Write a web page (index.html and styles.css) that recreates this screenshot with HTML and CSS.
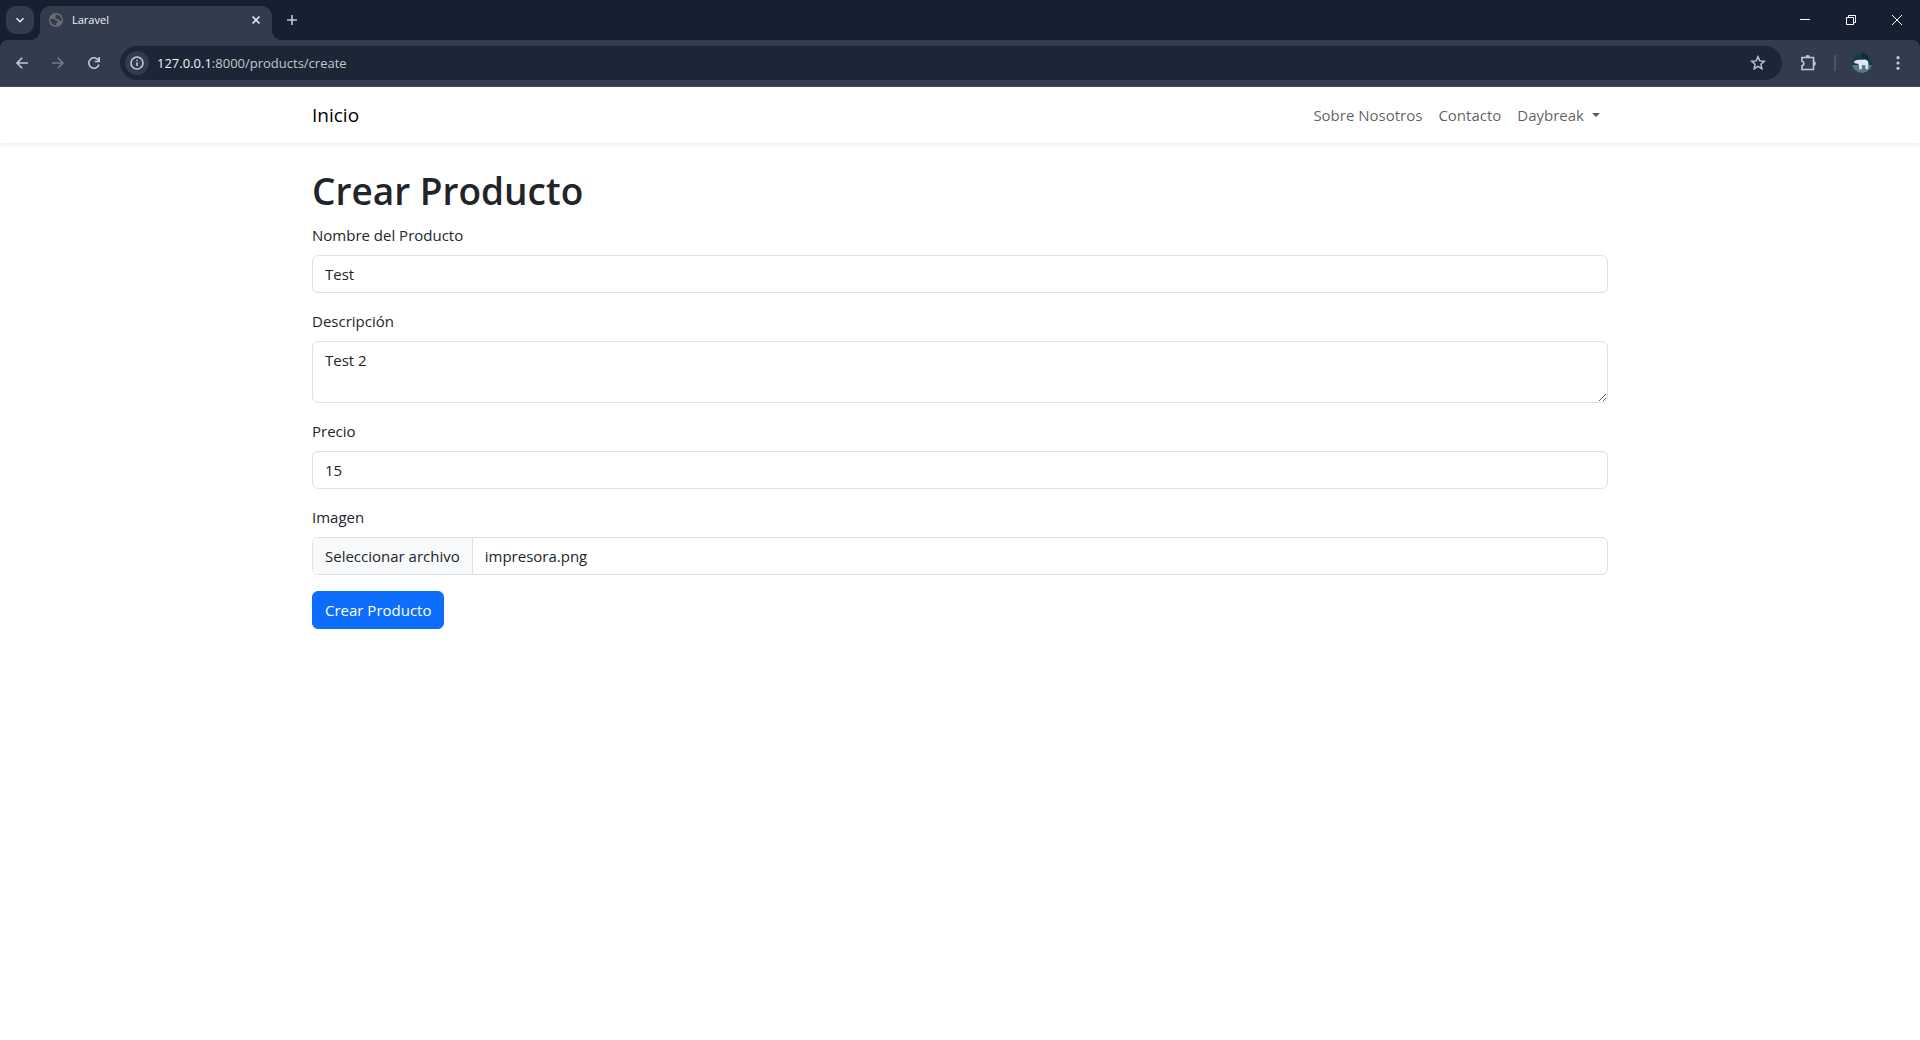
FILE: index.html
```html
<!DOCTYPE html>
<html lang="es">
<head>
<meta charset="utf-8">
<meta name="viewport" content="width=device-width, initial-scale=1">
<title>Laravel</title>
<link rel="stylesheet" href="styles.css">
</head>
<body>
<div class="browser">
  <div class="tab-strip">
    <button class="tab-search" type="button" aria-label="Buscar pestañas">
      <svg width="12" height="12" viewBox="0 0 12 12"><path d="M2.500 4.200 6 7.700l3.500-3.500" class="line strong"/></svg>
    </button>
    <div class="tab">
      <svg class="favicon" width="14" height="14" viewBox="0 0 14 14"><circle cx="7" cy="7" r="7" fill="#6b6d70"/><path d="M1.300 6h3c1.700 0 1.400 1.700 2.800 1.800 1.500.1 1.900.4 1.800 1.200-.1.900-1.500.8-1.600 1.500l-.2 1.900C4 12.300 1.400 9.700 1.300 6zM6.800 1.500c2.500 0 4.700 1.500 5.500 3.800.3 1 .4 1.700.3 2.500H11c-.8 0-.6-1.400-1.600-1.600-1-.2-2.200.1-2.800-.6-.7-.9.300-1.200 0-2C6.400 3 6.500 2.300 6.800 1.500z" fill="#333c4d"/></svg>
      <span class="tab-title">Laravel</span>
      <button class="tab-close" type="button" aria-label="Cerrar pestaña">
        <svg width="10" height="10" viewBox="0 0 10 10"><path d="m1.500 1.500 7 7m0-7-7 7" class="line strong"/></svg>
      </button>
    </div>
    <button class="new-tab" type="button" aria-label="Nueva pestaña">
      <svg width="12" height="12" viewBox="0 0 12 12"><path d="M6 1v10M1 6h10" class="line"/></svg>
    </button>
    <div class="window-controls">
      <button type="button" aria-label="Minimizar"><svg width="10" height="10" viewBox="0 0 10 10"><path d="M0 4.500h10" class="thin"/></svg></button>
      <button type="button" aria-label="Restaurar"><svg width="10" height="10" viewBox="0 0 10 10"><path d="M.5 2.500h7v7h-7zM2.500 2.500v-2h7v7h-2" class="thin"/></svg></button>
      <button type="button" aria-label="Cerrar"><svg width="10" height="10" viewBox="0 0 10 10"><path d="m0 0 10 10M10 0 0 10" class="thin"/></svg></button>
    </div>
  </div>
  <div class="toolbar">
    <button class="tool" type="button" aria-label="Atrás"><svg width="14" height="14" viewBox="0 0 14 14"><path d="M13 7H2m5.200-5.200L2 7l5.200 5.200" class="line"/></svg></button>
    <button class="tool disabled" type="button" aria-label="Adelante" disabled><svg width="14" height="14" viewBox="0 0 14 14"><path d="M1 7h11M6.800 1.800 12 7l-5.200 5.200" class="line"/></svg></button>
    <button class="tool" type="button" aria-label="Recargar"><svg width="14" height="14" viewBox="0 0 14 14"><path d="M11.800 5A5.200 5.200 0 1 0 12 8.500M12.200 1v4.500H7.700" class="line"/></svg></button>
    <div class="address">
      <button class="site-info" type="button" aria-label="Información del sitio"><svg width="14" height="14" viewBox="0 0 14 14"><circle cx="7" cy="7" r="6" class="line"/><path d="M7 6.300V10M7 3.700v1.400" class="line"/></svg></button>
      <span class="url"><span class="host">127.0.0.1</span>:8000/products/create</span>
      <button class="star" type="button" aria-label="Agregar a favoritos"><svg width="16" height="16" viewBox="0 0 16 16"><path d="m8 1.700 1.800 4.200 4.500.4-3.400 3 1 4.500L8 11.400l-3.900 2.400 1-4.500-3.400-3 4.500-.4z" class="line slim"/></svg></button>
    </div>
    <button class="tool" type="button" aria-label="Extensiones"><svg width="18" height="18" viewBox="0 0 18 18"><path d="M3 3.500h11.500v12H3v-3.700c2.500-.6 2.500-4 0-4.600z" class="line"/><path d="M6.500 3.300a2.200 2.200 0 0 1 4.400 0zM14.700 7.300a2.200 2.200 0 0 1 0 4.400z" fill="#c1c8da"/></svg></button>
    <span class="separator"></span>
    <button class="tool" type="button" aria-label="Perfil"><svg width="20" height="20" viewBox="0 0 20 20"><defs><clipPath id="avatar"><circle cx="10" cy="10" r="10"/></clipPath></defs><g clip-path="url(#avatar)"><path fill="#173c43" d="M0 0h20v20H0z"/><path fill="#527b80" d="M0 12h20v8H0z"/><path fill="#102b31" d="M10 0h6v7h-6z"/><path fill="#e2e5f7" d="M2 8.500 4.500 7l4-.2 5-.3 2.500 1.800.5 3-.7 5h-2.200l-.3-4-3.300-.2-.4 4.200H7.200L7 12l-2-1.500-2.500-.3z"/></g></svg></button>
    <button class="tool" type="button" aria-label="Menú"><svg width="4" height="14" viewBox="0 0 4 14" fill="#c1c8da"><circle cx="2" cy="1.700" r="1.600"/><circle cx="2" cy="7" r="1.600"/><circle cx="2" cy="12.300" r="1.600"/></svg></button>
  </div>
</div>

<header class="navbar">
  <nav class="container nav-inner">
    <a class="brand" href="#">Inicio</a>
    <div class="nav-links">
      <a href="#">Sobre Nosotros</a>
      <a href="#">Contacto</a>
      <a class="dropdown" href="#">Daybreak</a>
    </div>
  </nav>
</header>

<main class="container content">
  <h1>Crear Producto</h1>
  <form>
    <div class="field">
      <label for="name">Nombre del Producto</label>
      <input class="control" id="name" type="text" value="Test">
    </div>
    <div class="field">
      <label for="description">Descripción</label>
      <textarea class="control" id="description" rows="2">Test 2</textarea>
    </div>
    <div class="field">
      <label for="price">Precio</label>
      <input class="control" id="price" type="text" inputmode="decimal" value="15">
    </div>
    <div class="field">
      <label for="image">Imagen</label>
      <input class="file-input" id="image" type="file" accept="image/*">
      <label class="control file-control" for="image"><span class="file-button">Seleccionar archivo</span><span class="file-name">impresora.png</span></label>
    </div>
    <button class="submit" type="button">Crear Producto</button>
  </form>
</main>
</body>
</html>
```
FILE: styles.css
```css
*, *::before, *::after { box-sizing: border-box; }

body {
  margin: 0;
  background: #fff;
  color: #212529;
  font: 15px/24px "Segoe UI", "Open Sans", sans-serif;
}

button, input, textarea { font: inherit; color: inherit; }
a { color: inherit; text-decoration: none; }
svg { display: block; }

/* Browser window */
.browser { background: #172030; color: #e3e6ee; }
.browser button {
  display: flex;
  align-items: center;
  justify-content: center;
  flex: none;
  padding: 0;
  border: 0;
  background: none;
}
.line { fill: none; stroke: #c1c8da; stroke-width: 1.6; }
.strong { stroke: #e3e6ee; stroke-width: 1.6; }
.slim { stroke-width: 1.4; }
.thin { fill: none; stroke: #fff; stroke-width: 1; }

.tab-strip { display: flex; align-items: center; height: 40px; padding-left: 6px; }
.browser .tab-search { width: 28px; height: 28px; border-radius: 10px; background: #333c4d; }
.tab {
  position: relative;
  display: flex;
  align-items: center;
  align-self: flex-end;
  width: 232px;
  height: 34px;
  margin-left: 6px;
  padding: 0 8px 6px 9px;
  border-radius: 10px 10px 0 0;
  background: #333c4d;
}
.tab::before, .tab::after {
  content: "";
  position: absolute;
  bottom: 0;
  width: 10px;
  height: 10px;
}
.tab::before { right: 100%; background: radial-gradient(circle at 0 0, transparent 10px, #333c4d 10px); }
.tab::after { left: 100%; background: radial-gradient(circle at 100% 0, transparent 10px, #333c4d 10px); }
.tab-title { flex: 1; margin-left: 9px; color: #f1f3f8; font-size: 11px; line-height: 16px; }
.tab-close { width: 16px; height: 16px; }
.new-tab { width: 28px; height: 28px; margin-left: 6px; }
.window-controls { display: flex; margin-left: auto; }
.window-controls button { width: 46px; height: 40px; }

.toolbar {
  display: flex;
  align-items: center;
  height: 47px;
  padding: 0 4px 1px;
  border-bottom: 1px solid #484e5b;
  border-radius: 8px 8px 0 0;
  background: #333c4d;
}
.tool { width: 36px; height: 34px; }
.disabled { opacity: .45; }
.address {
  display: flex;
  align-items: center;
  flex: 1;
  height: 34px;
  margin: 0 8px;
  padding: 0 12px 0 5px;
  border-radius: 17px;
  background: #1d2636;
}
.browser .site-info { width: 24px; height: 24px; border-radius: 50%; background: #333c4d; }
.url { flex: 1; margin-left: 8px; color: #c3c6cc; font-size: 13px; line-height: 20px; }
.host { color: #f1f3f8; }
.star { width: 24px; height: 24px; }
.separator { width: 2px; height: 16px; margin: 0 8px; background: #4c5567; }

/* Page */
.container { width: 100%; max-width: 1320px; margin: 0 auto; padding: 0 12px; }
.navbar { padding: 8px 0; background: #fff; box-shadow: 0 2px 4px rgba(0, 0, 0, .075); }
.nav-inner { display: flex; align-items: center; justify-content: space-between; }
.brand { color: #000; font-size: 19px; line-height: 30px; }
.nav-links { display: flex; color: rgba(0, 0, 0, .65); }
.nav-links a { padding: 8px; }
.dropdown::after {
  content: "";
  display: inline-block;
  margin-left: 8px;
  vertical-align: 4px;
  border: solid transparent;
  border-width: 4px 4px 0;
  border-top-color: currentColor;
}

.content { padding-top: 24px; padding-bottom: 24px; }
h1 { margin: 0 0 8px; font-size: 37px; font-weight: 600; line-height: 48px; }
.field { margin-bottom: 16px; }
.field > label { display: block; margin-bottom: 8px; }
.control {
  display: block;
  width: 100%;
  min-height: 38px;
  padding: 6px 12px;
  border: 1px solid #dee2e6;
  border-radius: 6px;
  background: #fff;
}
textarea.control { min-height: 62px; resize: vertical; }
.file-input { position: absolute; width: 1px; height: 1px; opacity: 0; }
.field > .file-control { display: flex; margin: 0; padding: 0; overflow: hidden; }
.file-button { padding: 6px 12px; border-right: 1px solid #dee2e6; background: #f8f9fa; }
.file-name { padding: 6px 12px; }
.submit {
  padding: 6px 12px;
  border: 1px solid #0d6efd;
  border-radius: 6px;
  background: #0d6efd;
  color: #fff;
}
```
